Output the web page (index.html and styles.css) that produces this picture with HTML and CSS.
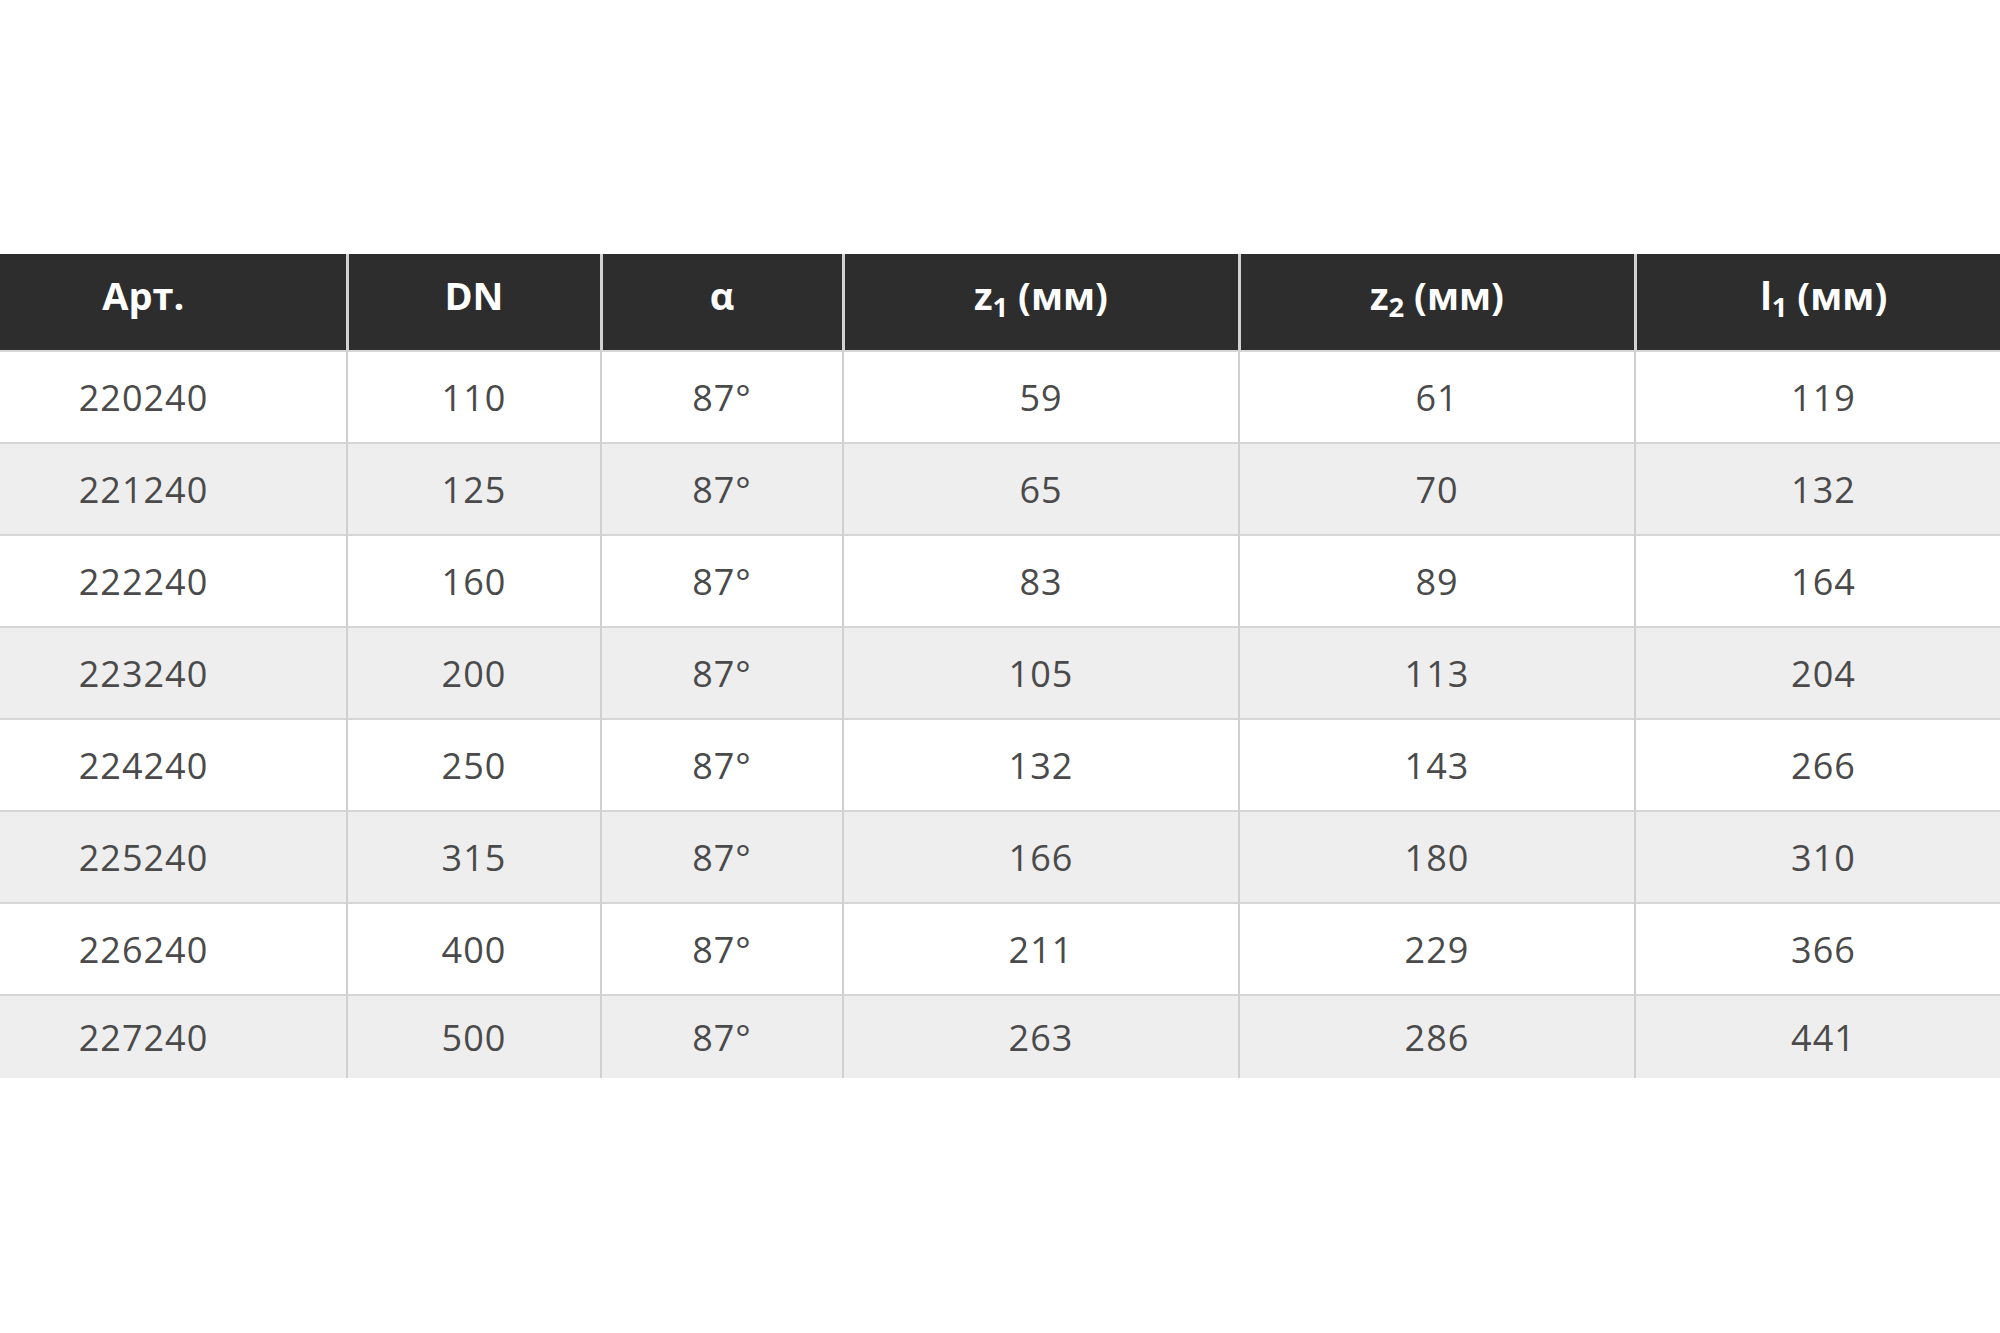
FILE: index.html
```html
<!DOCTYPE html>
<html lang="ru">
<head>
<meta charset="utf-8">
<title>Таблица</title>
<link rel="stylesheet" href="styles.css">
</head>
<body>
<div class="wrap">
<table class="spec">
  <colgroup>
    <col class="c1"><col class="c2"><col class="c3"><col class="c4"><col class="c5"><col class="c6">
  </colgroup>
  <thead>
    <tr>
      <th>Арт.</th>
      <th>DN</th>
      <th>α</th>
      <th>z<sub>1</sub> (мм)</th>
      <th>z<sub>2</sub> (мм)</th>
      <th>l<sub>1</sub> (мм)</th>
    </tr>
  </thead>
  <tbody>
    <tr><td>220240</td><td>110</td><td>87°</td><td>59</td><td>61</td><td>119</td></tr>
    <tr><td>221240</td><td>125</td><td>87°</td><td>65</td><td>70</td><td>132</td></tr>
    <tr><td>222240</td><td>160</td><td>87°</td><td>83</td><td>89</td><td>164</td></tr>
    <tr><td>223240</td><td>200</td><td>87°</td><td>105</td><td>113</td><td>204</td></tr>
    <tr><td>224240</td><td>250</td><td>87°</td><td>132</td><td>143</td><td>266</td></tr>
    <tr><td>225240</td><td>315</td><td>87°</td><td>166</td><td>180</td><td>310</td></tr>
    <tr><td>226240</td><td>400</td><td>87°</td><td>211</td><td>229</td><td>366</td></tr>
    <tr class="last"><td>227240</td><td>500</td><td>87°</td><td>263</td><td>286</td><td>441</td></tr>
  </tbody>
</table>
</div>
</body>
</html>
```
FILE: styles.css
```css
html, body {
  margin: 0;
  padding: 0;
  background: #ffffff;
}
body {
  width: 2000px;
  height: 1333px;
  overflow: hidden;
  font-family: "Open Sans", "DejaVu Sans", sans-serif;
}
.wrap {
  padding-top: 254px;
  margin-left: -59px;
}
.spec {
  width: 2070px;
  table-layout: fixed;
  border-collapse: collapse;
}
.c1 { width: 406px; }
.c2 { width: 254px; }
.c3 { width: 242px; }
.c4 { width: 396px; }
.c5 { width: 396px; }
.c6 { width: 376px; }

.spec th {
  background: #2d2d2d;
  color: #ffffff;
  font-weight: 700;
  font-size: 38px;
  height: 81px;
  padding: 0 0 15px 0;
  text-align: center;
  vertical-align: middle;
  border-left: 3px solid #d2d2d2;
  letter-spacing: 0;
}
.spec th:first-child,
.spec td:first-child { border-left: none; }
.spec sub {
  font-size: 0.72em;
  vertical-align: -0.25em;
  line-height: 0;
}
.spec td {
  color: #4a4a4a;
  font-size: 36px;
  font-weight: 400;
  letter-spacing: 1px;
  height: 90px;
  padding: 0;
  text-align: center;
  vertical-align: middle;
  border-left: 2px solid #d0d0d0;
  border-top: 2px solid #d6d6d6;
}
.spec thead tr th { border-bottom: 2px solid #d6d6d6; }
.spec tbody tr:nth-child(even) td { background: #eeeeee; }
.spec tbody tr.last td { height: 82px; }
```
